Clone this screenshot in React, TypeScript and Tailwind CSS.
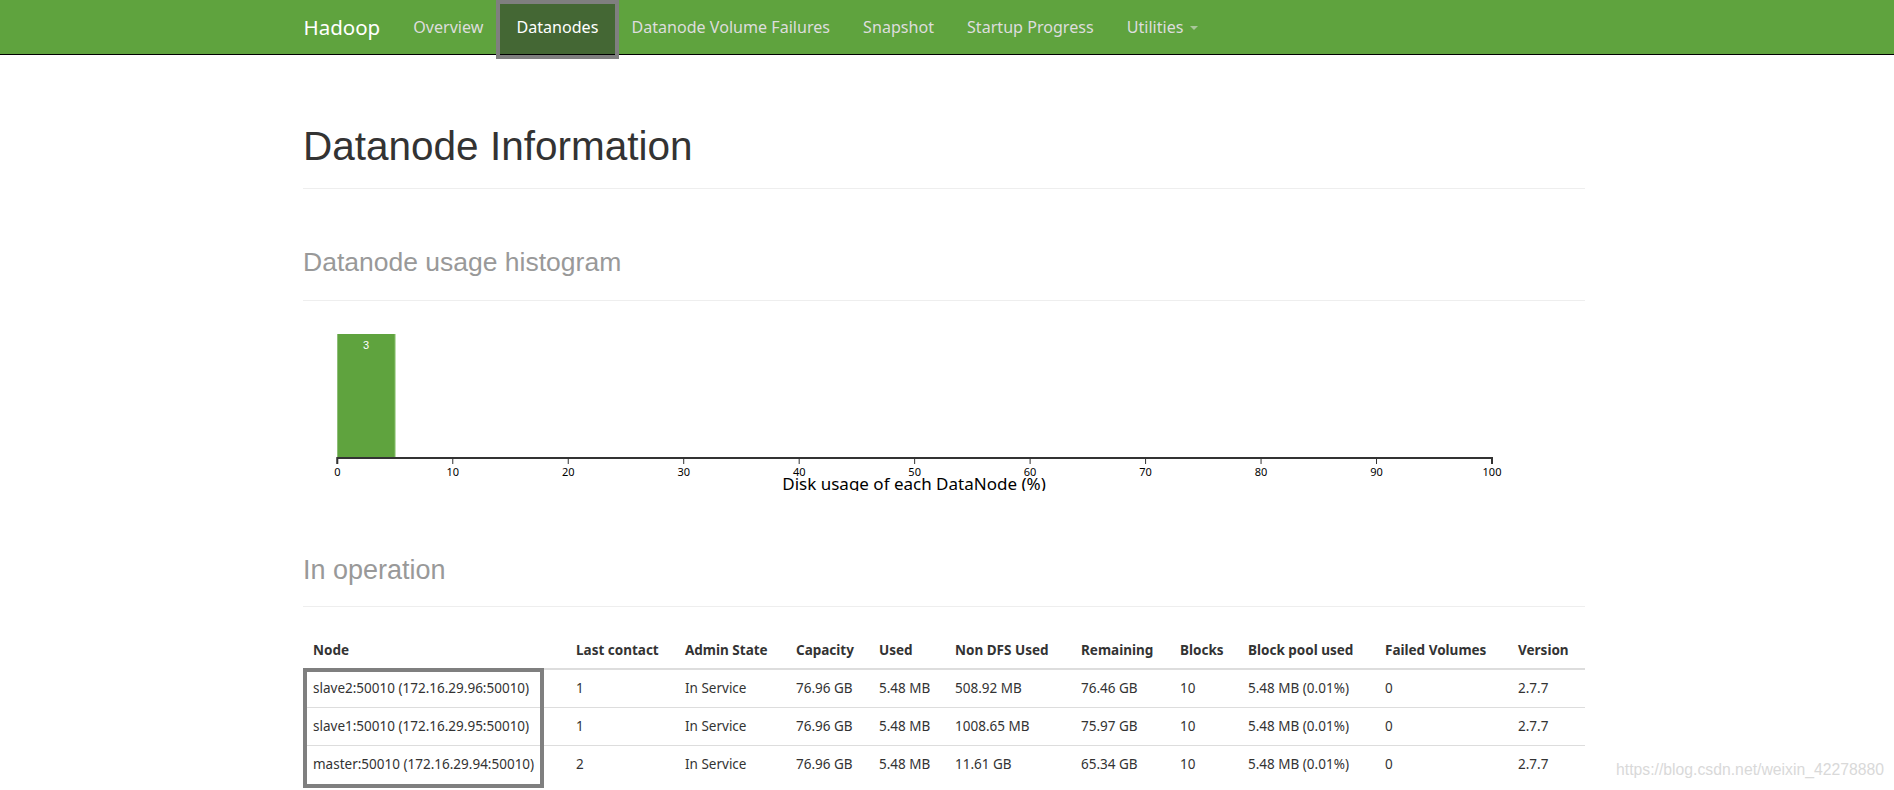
import React from 'react';

const navItems = ['Overview', 'Datanodes', 'Datanode Volume Failures', 'Snapshot', 'Startup Progress', 'Utilities'];

// larghezze colonne misurate sulla tabella originale
const columns = [
  { label: 'Node', width: 263 },
  { label: 'Last contact', width: 109 },
  { label: 'Admin State', width: 111 },
  { label: 'Capacity', width: 83 },
  { label: 'Used', width: 76 },
  { label: 'Non DFS Used', width: 126 },
  { label: 'Remaining', width: 99 },
  { label: 'Blocks', width: 68 },
  { label: 'Block pool used', width: 137 },
  { label: 'Failed Volumes', width: 133 },
  { label: 'Version', width: 77 },
];

const rows = [
  ['slave2:50010 (172.16.29.96:50010)', '1', 'In Service', '76.96 GB', '5.48 MB', '508.92 MB', '76.46 GB', '10', '5.48 MB (0.01%)', '0', '2.7.7'],
  ['slave1:50010 (172.16.29.95:50010)', '1', 'In Service', '76.96 GB', '5.48 MB', '1008.65 MB', '75.97 GB', '10', '5.48 MB (0.01%)', '0', '2.7.7'],
  ['master:50010 (172.16.29.94:50010)', '2', 'In Service', '76.96 GB', '5.48 MB', '11.61 GB', '65.34 GB', '10', '5.48 MB (0.01%)', '0', '2.7.7'],
];

const heading = { fontFamily: '"Liberation Sans", Arial, sans-serif' };

const Histogram: React.FC = () => {
  const x0 = 34.3;
  const unit = 11.547;
  const axisY = 157;
  const ticks = [0, 10, 20, 30, 40, 50, 60, 70, 80, 90, 100];
  return (
    <svg width={1282} height={190} className="block overflow-hidden">
      <rect x={x0} y={33} width={unit * 5} height={axisY - 33} fill="#5fa33e" />
      <line x1={x0 + unit * 5} y1={33} x2={x0 + unit * 5} y2={axisY} stroke="#8cc26f" strokeWidth={1} />
      <text x={x0 + (unit * 5) / 2} y={48} fill="#fff" fontSize={11} textAnchor="middle" fontFamily='"Liberation Sans", Arial, sans-serif'>
        3
      </text>
      <path d={`M${x0},${axisY + 6}V${axisY}H${x0 + unit * 100}V${axisY + 6}`} fill="none" stroke="#333" strokeWidth={2} />
      {ticks.map((t) => (
        <g key={t}>
          <line x1={x0 + t * unit} y1={axisY} x2={x0 + t * unit} y2={axisY + 6} stroke="#333" strokeWidth={1} />
          <text x={x0 + t * unit} y={175} fontSize={11} textAnchor="middle" fill="#000" fontFamily='"Noto Sans", sans-serif'>
            {t}
          </text>
        </g>
      ))}
      <text x={611} y={189} fontSize={17} textAnchor="middle" fill="#000" fontFamily='"Noto Sans", sans-serif'>
        Disk usage of each DataNode (%)
      </text>
    </svg>
  );
};

export default function App() {
  return (
    <div className="relative h-[790px] w-full overflow-hidden bg-white text-[#333]" style={{ fontFamily: '"Noto Sans", sans-serif' }}>
      {/* Navbar */}
      <nav className="h-[55px] border-b border-black bg-[#5fa33e]">
        <div className="ml-[287px] flex h-full items-stretch">
          <span className="flex items-center px-[16.5px] text-[20.5px] text-white">Hadoop</span>
          {navItems.map((item) => {
            const active = item === 'Datanodes';
            return (
              <span
                key={item}
                className={`relative flex items-center px-[16.5px] text-[16.1px] ${active ? 'bg-[#446734] text-white' : 'text-[#dddddd]'}`}
              >
                {item}
                {item === 'Utilities' && (
                  <span className="ml-[7px] mt-[2px] h-0 w-0 border-x-[4px] border-t-[4px] border-x-transparent border-t-[#a9c79a]" />
                )}
                {active && <span className="absolute -left-1 -right-1 top-0 -bottom-[5px] border-4 border-[#7f7f7f]" />}
              </span>
            );
          })}
        </div>
      </nav>

      <div className="ml-[303px] w-[1282px]">
        <div className="border-b border-[#eeeeee] pb-[19px] pt-[69px]">
          <h1 className="text-[40.5px] leading-[45px] text-[#333]" style={heading}>
            Datanode Information
          </h1>
        </div>

        <div className="border-b border-[#eeeeee] pb-[23px] pt-[58px]">
          <h3 className="text-[26.5px] leading-[30px] text-[#999]" style={heading}>
            Datanode usage histogram
          </h3>
        </div>

        <Histogram />

        <div className="border-b border-[#eeeeee] pb-[21px] pt-[64px]">
          <h3 className="text-[27px] leading-[30px] text-[#999]" style={heading}>
            In operation
          </h3>
        </div>

        <div className="relative mt-[26px]">
          <table className="w-[1282px] table-fixed border-collapse text-[13.5px]">
            <colgroup>
              {columns.map((c) => (
                <col key={c.label} style={{ width: c.width }} />
              ))}
            </colgroup>
            <thead>
              <tr>
                {columns.map((c) => (
                  <th key={c.label} className="h-[36px] border-b-2 border-[#dddddd] px-[10px] text-left align-middle font-bold">
                    {c.label}
                  </th>
                ))}
              </tr>
            </thead>
            <tbody>
              {rows.map((r, i) => (
                <tr key={i}>
                  {r.map((cell, j) => (
                    <td key={j} className={`h-[38px] px-[10px] align-middle whitespace-nowrap ${i > 0 ? 'border-t border-[#dddddd]' : ''}`}>
                      {cell}
                    </td>
                  ))}
                </tr>
              ))}
            </tbody>
          </table>
          {/* riquadro di evidenziazione sulla colonna Node */}
          <div className="absolute left-0 top-[35px] h-[120px] w-[241px] border-4 border-[#7f7f7f]" />
        </div>
      </div>

      <span
        className="absolute bottom-[8px] right-[10px] text-[15.75px] text-[#d9d9d9]"
        style={{ fontFamily: '"Liberation Sans", Arial, sans-serif' }}
      >
        https://blog.csdn.net/weixin_42278880
      </span>
    </div>
  );
}
